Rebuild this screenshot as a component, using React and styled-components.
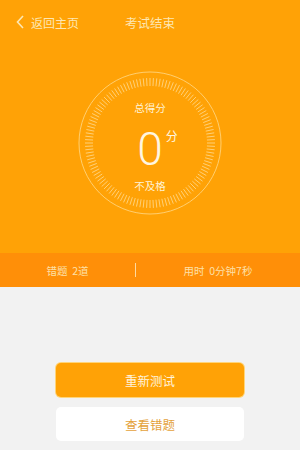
import React from "react";
import styled, { createGlobalStyle } from "styled-components";

const Global = createGlobalStyle`
  html, body { margin: 0; padding: 0; }
  body {
    width: 300px;
    height: 450px;
    overflow: hidden;
    background: #f2f2f2;
    font-family: "Noto Sans CJK SC", "Noto Sans", sans-serif;
  }
`;

const Page = styled.div`
  display: flex;
  flex-direction: column;
  height: 450px;
`;

const Top = styled.div`
  background: #ffa206;
  height: 253px;
  display: flex;
  flex-direction: column;
`;

const NavBar = styled.div`
  height: 44px;
  display: flex;
  align-items: center;
  position: relative;
`;

const Back = styled.div`
  display: flex;
  align-items: center;
  gap: 6px;
  padding-left: 15px;
  color: #fde7b4;
  font-size: 12px;
`;

const NavTitle = styled.div`
  position: absolute;
  left: 0;
  right: 0;
  text-align: center;
  color: #fde7b4;
  font-size: 12.5px;
  pointer-events: none;
`;

const Dial = styled.div`
  position: relative;
  width: 146px;
  height: 146px;
  margin: 26px auto 0;
  padding-top: 30px;
  box-sizing: border-box;
  display: flex;
  flex-direction: column;
  align-items: center;
`;

const DialSvg = styled.svg`
  position: absolute;
  inset: 0;
`;

const Label = styled.div`
  color: #fff3d6;
  font-size: 10.5px;
  line-height: 16px;
  position: relative;
`;

const Score = styled.div`
  position: relative;
  color: #fff6e0;
  font-family: Roboto, "Noto Sans", sans-serif;
  font-weight: 300;
  font-size: 46px;
  line-height: 54px;
  margin: 6px 0 2px;
`;

const Unit = styled.span`
  position: absolute;
  left: 100%;
  top: 6px;
  margin-left: 3px;
  font-family: "Noto Sans CJK SC", sans-serif;
  font-weight: 400;
  font-size: 12px;
  line-height: 16px;
`;

const Stats = styled.div`
  height: 34px;
  background: #ff8f08;
  display: flex;
  align-items: center;
  color: #fde0a8;
  font-size: 10.5px;
`;

const StatCell = styled.div`
  flex: 0 0 ${(p) => p.$w}px;
  display: flex;
  justify-content: center;
`;

const Divider = styled.div`
  width: 1px;
  height: 14px;
  background: #fdd9a0;
`;

const Actions = styled.div`
  display: flex;
  flex-direction: column;
  align-items: center;
  gap: 10px;
  padding-top: 76px;
`;

const Button = styled.div`
  width: 188px;
  height: 34px;
  border-radius: 5px;
  display: flex;
  align-items: center;
  justify-content: center;
  font-size: 12.5px;
  background: ${(p) => (p.$primary ? "#ffa206" : "#ffffff")};
  color: ${(p) => (p.$primary ? "#fff3dc" : "#e4a23c")};
  box-shadow: ${(p) => (p.$primary ? "0 0 0 1px #ffd57a" : "none")};
`;

const ticks = Array.from({ length: 120 }, (_, i) => {
  const a = (i / 120) * Math.PI * 2;
  const r1 = 57;
  const r2 = 65;
  return {
    x1: 73 + r1 * Math.cos(a),
    y1: 73 + r1 * Math.sin(a),
    x2: 73 + r2 * Math.cos(a),
    y2: 73 + r2 * Math.sin(a),
  };
});

export default function App() {
  return (
    <Page>
      <Global />
      <Top>
        <NavBar>
          <Back>
            <svg width="10" height="16" viewBox="0 0 10 16">
              <path d="M8 2 L2.5 8 L8 14" fill="none" stroke="#fde7b4" strokeWidth="1.6" />
            </svg>
            返回主页
          </Back>
          <NavTitle>考试结束</NavTitle>
        </NavBar>
        <Dial>
          <DialSvg width="146" height="146" viewBox="0 0 146 146">
            <circle cx="73" cy="73" r="71" fill="none" stroke="#ffd98a" strokeWidth="0.8" />
            {ticks.map((t, i) => (
              <line key={i} {...t} stroke="#ffdc94" strokeWidth="0.8" />
            ))}
          </DialSvg>
          <Label>总得分</Label>
          <Score>
            0<Unit>分</Unit>
          </Score>
          <Label>不及格</Label>
        </Dial>
      </Top>
      <Stats>
        <StatCell $w={135}>错题&nbsp;&nbsp;2道</StatCell>
        <Divider />
        <StatCell $w={164}>用时&nbsp;&nbsp;0分钟7秒</StatCell>
      </Stats>
      <Actions>
        <Button $primary>重新测试</Button>
        <Button>查看错题</Button>
      </Actions>
    </Page>
  );
}
